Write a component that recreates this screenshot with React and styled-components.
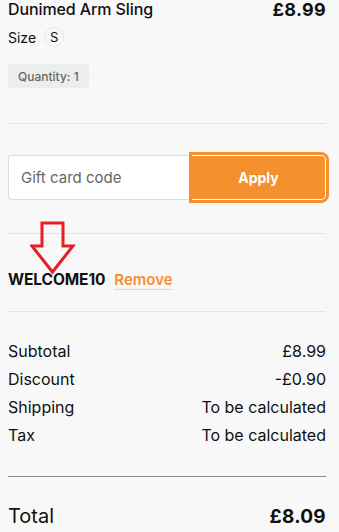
import styled, { createGlobalStyle } from "styled-components";

const GlobalStyle = createGlobalStyle`
    html, body {
        margin: 0;
        padding: 0;
        background: #f8f8f8;
    }
    body {
        font-family: Inter, "Noto Sans", sans-serif;
        color: #111;
        overflow: hidden;
    }
`;

const Page = styled.div`
    width: 318px;
    padding: 0 13px 0 8px;
    display: flex;
    flex-direction: column;
`;

const ItemHeader = styled.div`
    display: flex;
    justify-content: space-between;
    align-items: center;
    height: 20px;
    margin-top: -1px;
`;

const ItemName = styled.span`
    font-size: 16px;
    font-weight: 500;
    letter-spacing: -0.1px;
`;

const ItemPrice = styled.span`
    font-size: 18px;
    font-weight: 700;
    letter-spacing: 0.3px;
`;

const SizeRow = styled.div`
    display: flex;
    align-items: center;
    gap: 8px;
    margin-top: 8px;
    font-size: 14px;
`;

const SizeChip = styled.span`
    width: 18px;
    height: 18px;
    border-radius: 50%;
    border: 1px solid #e6e6e6;
    display: flex;
    align-items: center;
    justify-content: center;
    font-size: 13px;
`;

const QuantityBadge = styled.span`
    align-self: flex-start;
    margin-top: 17px;
    height: 24px;
    padding: 0 10px;
    display: flex;
    align-items: center;
    background: #eceded;
    border-radius: 3px;
    font-size: 12px;
    font-weight: 500;
    color: #666;
`;

const Divider = styled.hr`
    border: none;
    border-top: 1px solid ${(p) => (p.$strong ? "#8c8c8c" : "#e4e4e4")};
    margin: ${(p) => p.$margin};
    width: 100%;
`;

const GiftForm = styled.div`
    display: flex;
    height: 45px;
    margin-top: 31px;
`;

const GiftInput = styled.input`
    width: 184px;
    min-width: 0;
    flex: none;
    box-sizing: border-box;
    border: 1px solid #dcdcdc;
    border-right: none;
    border-radius: 4px 0 0 4px;
    background: #fff;
    padding: 0 12px;
    font-family: inherit;
    font-size: 15px;
    color: #111;
    outline: none;
    &::placeholder {
        color: #666;
    }
`;

const ApplyButton = styled.button`
    width: 134px;
    flex: none;
    box-sizing: border-box;
    border: 1px solid #fff;
    border-left: none;
    border-radius: 0 5px 5px 0;
    background: #f5902f;
    color: #fff;
    font-family: inherit;
    font-size: 14px;
    font-weight: 700;
    box-shadow: 0 0 0 3px #f5902f;
    cursor: pointer;
`;

const CouponSection = styled.div`
    position: relative;
    display: flex;
    align-items: center;
    gap: 9px;
    height: 77px;
    padding-top: 13px;
    box-sizing: border-box;
`;

const CouponCode = styled.span`
    font-size: 15.5px;
    font-weight: 700;
    letter-spacing: -0.1px;
`;

const RemoveLink = styled.a`
    font-size: 15px;
    font-weight: 600;
    color: #f5902f;
    text-decoration: underline;
    text-decoration-color: #d8d8d8;
    text-underline-offset: 4px;
    cursor: pointer;
`;

const Arrow = styled.svg`
    position: absolute;
    left: 22px;
    top: -14px;
`;

const Summary = styled.div`
    display: flex;
    flex-direction: column;
    gap: 10px;
    margin-top: 30px;
`;

const SummaryRow = styled.div`
    display: flex;
    justify-content: space-between;
    align-items: center;
    height: 18px;
    font-size: 16px;
`;

const TotalRow = styled.div`
    display: flex;
    justify-content: space-between;
    align-items: center;
    margin-top: 27px;
    font-size: 20px;
`;

const TotalValue = styled.span`
    font-size: 19px;
    font-weight: 700;
    letter-spacing: 0.3px;
`;

const rows = [
    ["Subtotal", "£8.99"],
    ["Discount", "-£0.90"],
    ["Shipping", "To be calculated"],
    ["Tax", "To be calculated"],
];

export default function App() {
    return (
        <>
            <GlobalStyle />
            <Page>
                <ItemHeader>
                    <ItemName>Dunimed Arm Sling</ItemName>
                    <ItemPrice>£8.99</ItemPrice>
                </ItemHeader>
                <SizeRow>
                    Size <SizeChip>S</SizeChip>
                </SizeRow>
                <QuantityBadge>Quantity: 1</QuantityBadge>
                <Divider $margin="35px 0 0" />
                <GiftForm>
                    <GiftInput placeholder="Gift card code" />
                    <ApplyButton>Apply</ApplyButton>
                </GiftForm>
                <Divider $margin="33px 0 0" />
                <CouponSection>
                    <Arrow width="46" height="56" viewBox="0 0 46 56">
                        <path
                            d="M12 3 H33 V26 H43 L22.5 52 L2 26 H12 Z"
                            fill="none"
                            stroke="#e61e28"
                            strokeWidth="3"
                            strokeLinejoin="miter"
                        />
                    </Arrow>
                    <CouponCode>WELCOME10</CouponCode>
                    <RemoveLink>Remove</RemoveLink>
                </CouponSection>
                <Divider $margin="0" />
                <Summary>
                    {rows.map(([label, value]) => (
                        <SummaryRow key={label}>
                            <span>{label}</span>
                            <span>{value}</span>
                        </SummaryRow>
                    ))}
                </Summary>
                <Divider $strong $margin="32px 0 0" />
                <TotalRow>
                    <span>Total</span>
                    <TotalValue>£8.09</TotalValue>
                </TotalRow>
            </Page>
        </>
    );
}
